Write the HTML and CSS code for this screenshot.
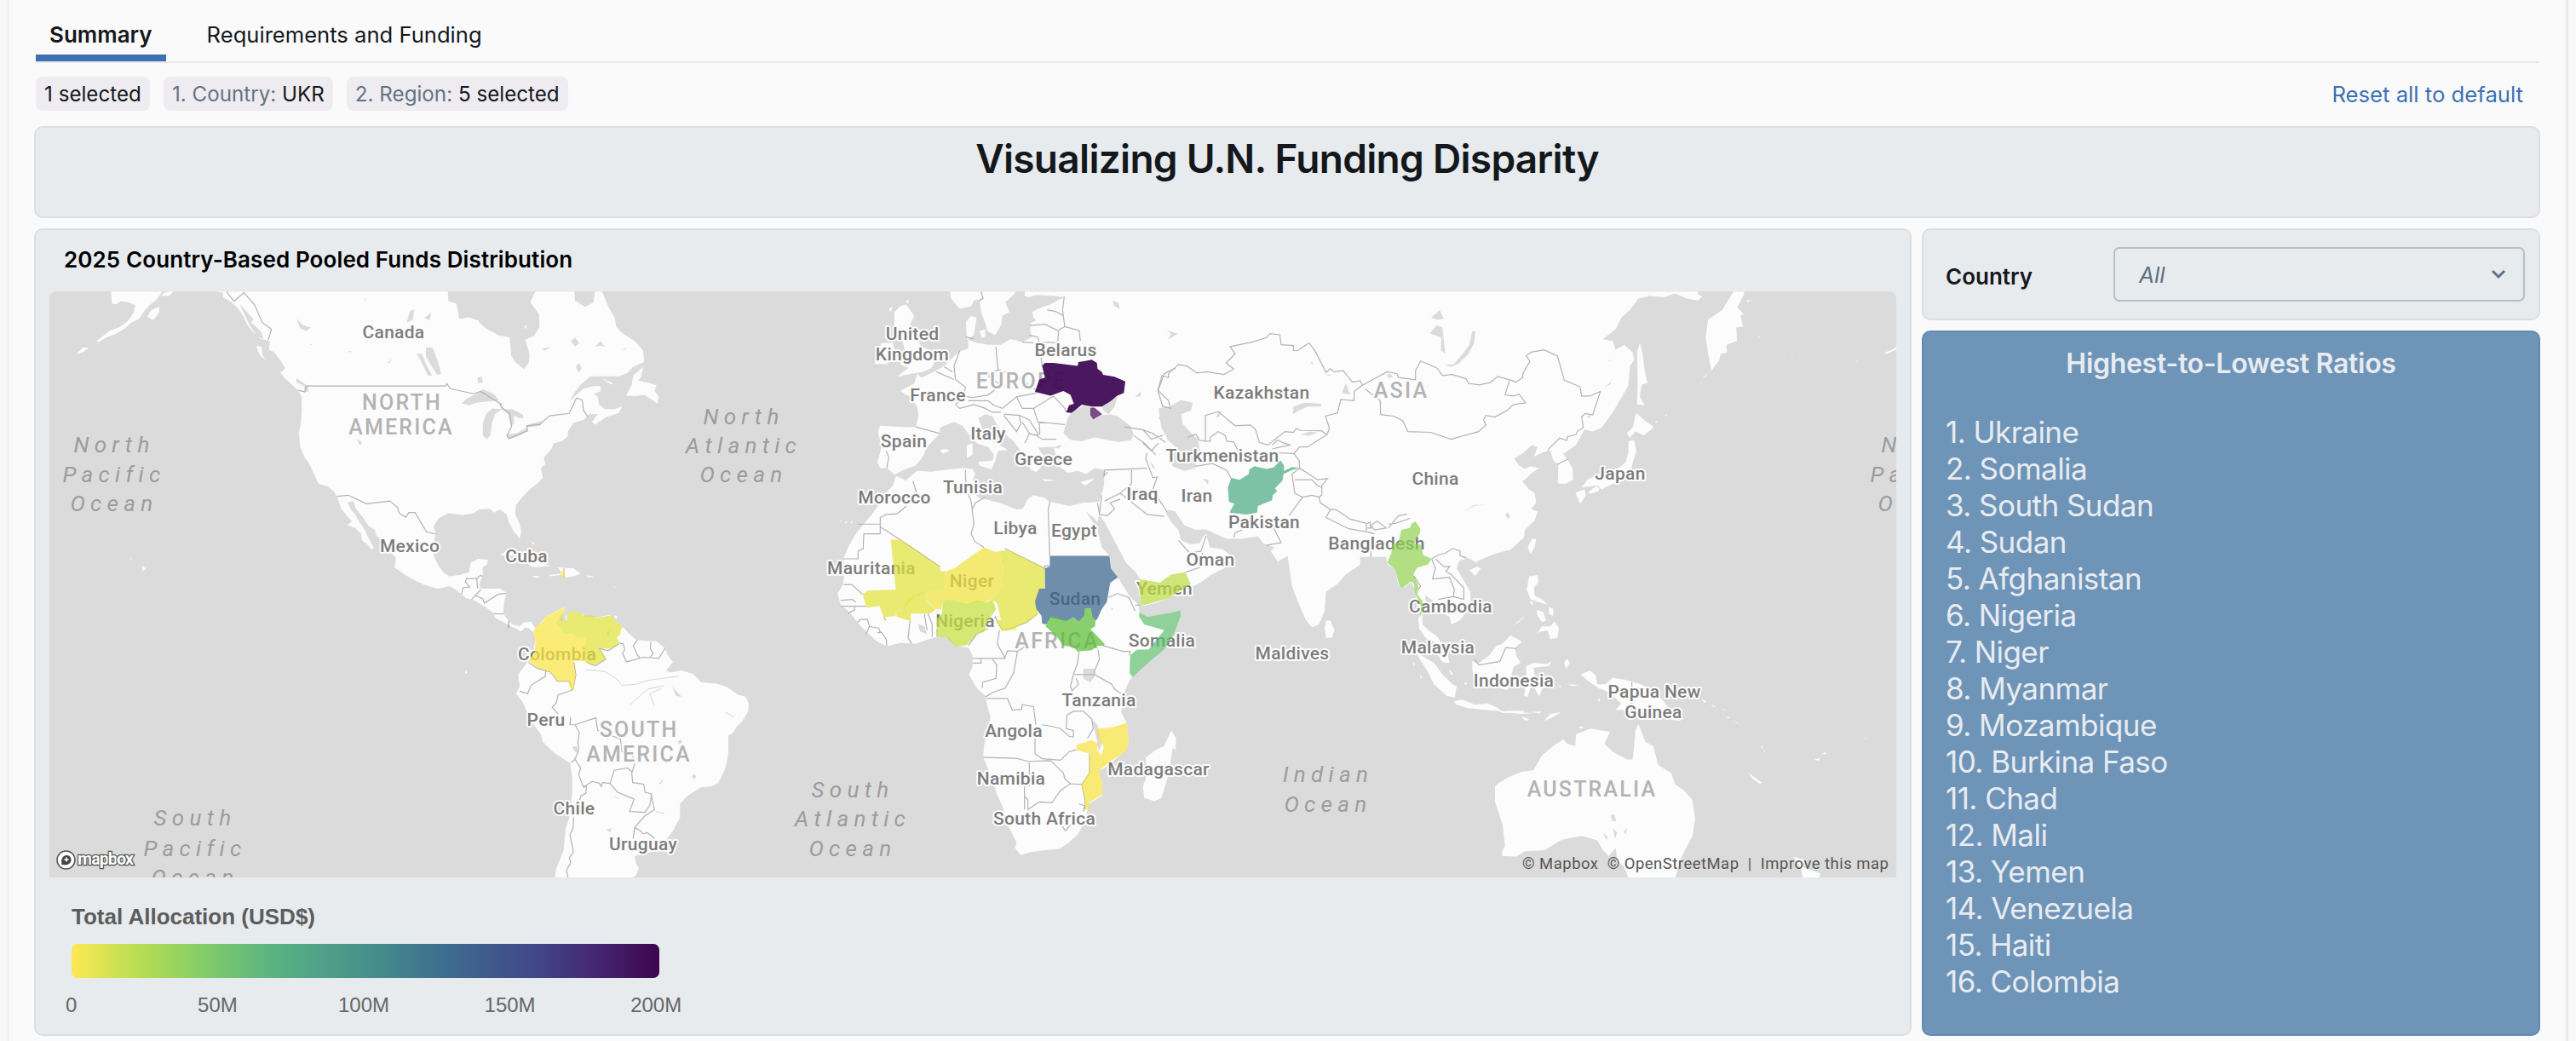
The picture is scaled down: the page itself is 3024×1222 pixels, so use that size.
FILE: index.html
```
<!DOCTYPE html>
<html lang="en">
<head>
  <meta charset="UTF-8">
  <meta name="viewport" content="width=device-width, initial-scale=1.0">
  <title>Visualizing U.N. Funding Disparity</title>
  <link rel="stylesheet" href="styles.css">
</head>
<body>
  <div class="page">
    <nav class="tabs">
      <a class="tab active">Summary</a>
      <a class="tab">Requirements and Funding</a>
    </nav>

    <div class="filters">
      <span class="chip">1 selected</span>
      <span class="chip"><em>1. Country:</em> UKR</span>
      <span class="chip"><em>2. Region:</em> 5 selected</span>
      <a class="reset">Reset all to default</a>
    </div>

    <header class="card banner">
      <h1>Visualizing U.N. Funding Disparity</h1>
    </header>

    <main class="grid">
      <section class="card map-card">
        <h2>2025 Country-Based Pooled Funds Distribution</h2>
        <svg class="map" viewBox="58 342 2168 688">
          <!-- land -->
          <g class="land">
            <g transform="translate(40 330) scale(.357143 .452806)">
              <path d="M253 27L256 58 270 60 285 52 312 56 332 62 328 80 310 102 280 120 250 128 205 155 212 158 240 145 265 138 300 122 318 108 345 98 362 78 380 62 400 50 412 38 420 27ZM418 38L425 31 440 27 458 27 445 38ZM372 92L385 75 412 66 410 82 392 101ZM140 188L160 172 180 172 165 182 145 189Z"/>
              <path d="M598 27L620 30 622 42 650 55 672 72 690 95 700 112 720 132 745 150 775 155 772 178 790 185 812 208 825 225 812 238 822 250 850 270 868 283 880 300 880 340 877 370 870 395 875 430 888 455 905 475 920 500 935 525 965 532 985 545 995 558 1010 590 1030 610 1045 622 1030 632 1055 640 1075 655 1078 672 1095 682 1110 697 1117 692 1108 678 1095 660 1088 645 1070 625 1055 605 1040 590 1030 575 1050 570 1058 590 1080 612 1100 635 1120 645 1125 660 1145 672 1145 700 1175 705 1190 718 1185 742 1220 762 1250 775 1280 787 1330 798 1365 790 1390 802 1405 812 1420 822 1440 825 1462 833 1462 720 1435 730 1430 755 1400 762 1365 765 1345 755 1330 738 1315 715 1310 690 1320 655 1313 635 1330 615 1360 602 1410 606 1445 602 1462 592 1462 103 1430 94 1398 98 1388 58 1362 52 1360 27Z"/>
              <path d="M730 168L748 170 750 190 760 205 740 190ZM808 235L832 236 838 241 815 242ZM355 738L368 745 357 752ZM316 718L320 719 318 722ZM1417 1008L1425 1015 1417 1018Z"/>
            </g>
            <g transform="translate(560 330) scale(.333333 .452806)">
              <path d="M0 102L30 122 75 140 115 146 120 192 135 210 165 228 182 212 185 190 170 152 200 142 220 120 218 85 188 55 205 27 342 27 345 50 380 67 410 55 415 27 440 27 465 70 485 95 490 118 512 135 555 155 585 180 588 210 550 222 530 238 500 247 400 247 365 268 340 292 325 312 372 280 410 272 435 272 436 285 412 292 425 300 430 320 450 332 485 332 510 325 500 342 455 352 415 372 405 365 425 345 395 345 375 360 340 367 320 390 320 402 298 415 270 420 262 435 235 458 240 475 225 485 232 510 215 523 185 540 160 560 137 580 135 605 150 630 156 650 150 667 130 650 112 625 105 605 80 592 60 600 45 590 0 592Z"/>
              <path d="M525 297L545 268 550 245 585 222 578 248 568 258 610 265 632 270 625 285 640 300 635 318 618 308 600 300 590 295 560 298ZM440 252L480 265 470 268ZM165 118L176 114 172 124Z"/>
              <path d="M0 720L38 722 35 735 20 742 20 765 10 780 10 797 80 797 104 808 95 835 92 862 105 875 125 890 150 895 165 885 190 883 205 900 200 912 182 900 170 898 155 908 135 900 118 895 95 885 62 872 60 862 30 845 0 832Z"/>
              <path d="M80 710L110 697 145 700 200 725 258 738 205 742 185 738 180 725 140 712ZM285 742L340 745 365 758 340 765 315 768 290 762 258 765 255 762 300 758ZM194 764L222 765 215 769 200 768ZM388 763L409 765 405 768 388 767ZM190 673L202 680 198 684ZM485 866L494 868 492 875 484 874ZM483 792L489 793 486 796Z"/>
              <path d="M205 900L225 885 245 868 280 855 310 845 308 855 290 875 300 885 315 865 340 855 370 862 380 872 420 872 470 865 485 880 515 897 530 910 560 930 600 933 630 933 660 950 672 970 690 988 665 1010 680 1015 720 1009 760 1018 790 1040 840 1043 880 1052 920 1073 945 1077 957 1095 955 1115 935 1140 915 1155 900 1172 885 1178 885 1225 875 1262 850 1300 825 1310 790 1312 740 1335 715 1355 715 1390 690 1425 670 1445 655 1460 620 1478 555 1490 560 1510 570 1522 560 1540 550 1546 275 1546 278 1525 305 1475 312 1420 325 1390 335 1330 335 1285 328 1250 270 1222 232 1195 225 1175 200 1150 175 1115 160 1090 138 1070 150 1050 145 1020 165 1000 180 985 200 955 205 930 198 910Z"/>
            </g>
            <g transform="translate(960 330) scale(.333333 .452806)">
              <path d="M275 505L310 517 350 492 400 494 460 488 510 485 545 487 555 500 545 515 558 530 545 548 570 562 640 575 700 592 722 590 740 565 760 555 800 562 815 572 850 577 885 583 935 575 990 572 992 604 985 625 970 612 945 598 985 645 1000 690 1028 712 1035 745 1057 768 1075 790 1100 818 1130 840 1133 858 1160 870 1240 860 1277 853 1275 875 1255 915 1220 955 1160 990 1108 1027 1098 1035 1085 1055 1070 1090 1070 1120 1088 1145 1095 1195 1085 1218 1050 1238 1010 1262 988 1270 1002 1300 1000 1335 955 1355 950 1370 940 1400 915 1435 885 1455 850 1472 800 1475 750 1480 715 1488 695 1470 700 1455 680 1425 665 1405 650 1360 630 1330 620 1300 600 1265 583 1235 585 1205 600 1160 608 1130 595 1095 590 1075 560 1055 532 1020 545 1000 545 970 530 950 485 945 465 925 440 920 405 925 345 940 290 938 242 947 210 935 180 915 165 905 140 885 120 865 100 850 80 838 70 810 90 785 95 740 90 720 110 685 130 660 150 640 185 610 200 595 225 570 245 545 265 530Z"/>
              <path d="M465 27L470 45 500 72 540 65 550 50 570 48 575 80 590 110 598 130 625 140 645 115 650 90 675 80 660 55 690 35 697 27Z"/>
              <path d="M730 27L728 38 740 42 770 36 830 38 870 42 850 48 820 60 775 72 755 80 760 95 770 102 750 108 748 130 755 145 720 158 680 150 645 165 600 165 560 160 525 150 522 105 540 90 560 95 555 115 550 140 530 150 530 175 500 182 480 195 445 220 410 235 365 250 350 240 340 265 290 285 325 300 350 325 355 350 345 378 300 378 220 375 212 390 225 430 210 470 220 485 245 485 270 502 300 490 345 478 370 455 385 430 430 395 430 380 480 365 510 375 530 395 560 420 600 430 620 450 615 470 625 465 635 440 670 438 640 425 600 405 580 385 565 355 590 345 615 350 640 385 690 415 715 440 735 465 750 490 770 495 790 478 800 455 780 440 800 430 830 430 838 450 850 480 880 497 915 492 945 500 975 485 1010 490 1008 530 990 575 992 605 1010 625 1050 680 1085 730 1120 755 1138 775 1130 790 1138 838 1150 842 1200 832 1200 27Z"/>
              <path d="M270 80L290 65 310 60 340 90 325 112 345 140 365 170 415 185 415 205 400 225 370 235 330 240 280 248 300 235 320 225 290 215 310 190 300 160 290 130 270 115ZM225 160L265 160 270 190 245 215 200 215 205 195 215 180ZM570 130L590 125 590 145 575 145ZM250 72L262 66 258 80ZM310 52L322 48 318 58Z"/>
              <path d="M525 425L545 420 545 450 525 458ZM535 395L545 398 542 412ZM565 468L625 465 612 488 570 478ZM790 513L840 517 800 519ZM925 522L945 516 975 512 955 524 940 530ZM430 438L450 435 465 440 440 447ZM95 624L103 623 98 629ZM115 626L123 620 120 629ZM78 621L82 620 81 625Z"/>
            </g>
            <g transform="translate(1340 330) scale(.333333 .452806)">
              <path d="M58 27L58 832 95 822 165 795 200 785 245 762 290 745 322 715 285 695 240 690 228 655 215 665 205 680 170 682 140 672 130 645 105 625 85 600 95 593 118 597 150 632 190 645 225 643 260 655 300 668 350 668 410 662 430 680 470 690 455 700 480 727 515 712 522 750 530 790 550 830 580 880 600 898 625 890 645 855 650 805 690 785 720 760 770 735 770 715 808 715 860 715 868 735 895 750 905 790 925 795 950 780 965 800 970 830 985 860 975 875 978 900 1000 925 1030 935 1045 970 1060 988 1085 990 1075 960 1045 925 1030 915 1010 905 990 890 988 850 1000 835 1000 815 1030 830 1050 855 1085 870 1092 890 1120 880 1160 845 1158 805 1130 770 1110 745 1120 725 1150 718 1180 730 1185 725 1240 708 1290 698 1302 696 1302 27Z"/>
              <path d="M955 950L985 970 1030 990 1060 1020 1095 1045 1110 1050 1103 1080 1075 1075 1030 1045 1010 1015 985 985ZM1100 1090L1130 1085 1175 1098 1220 1095 1250 1105 1270 1115 1215 1112 1150 1107 1110 1098ZM1165 985L1185 992 1225 970 1250 945 1270 940 1300 918 1340 935 1315 950 1320 970 1335 990 1310 1000 1300 1030 1290 1060 1260 1055 1220 1050 1190 1050 1165 1010ZM650 880L665 880 680 905 670 925 650 925 645 900ZM1155 750L1180 740 1195 745 1175 764ZM955 988L963 992 960 997ZM980 1020L988 1026 984 1030ZM1080 1005L1098 1018 1092 1022ZM1138 1040L1147 1042 1140 1048ZM1275 1118L1290 1114 1340 1118 1380 1120 1340 1122ZM1335 1130L1365 1138 1350 1138Z"/>
              <path d="M105 1165L122 1185 120 1215 110 1210 95 1280 70 1340 45 1348 10 1340 5 1310 20 1280 15 1235 50 1215 80 1205ZM252 1273L256 1274 254 1277Z"/>
            </g>
            <g transform="translate(1760 330) scale(.333333 .452806)">
              <path d="M38 27L38 698 60 682 87 665 90 645 125 620 135 598 112 590 130 575 125 550 105 540 82 520 110 500 140 485 110 480 90 487 70 478 52 460 85 445 115 425 135 430 122 455 150 445 180 438 190 465 208 475 206 525 235 525 260 515 258 485 240 462 225 448 270 425 300 385 330 390 360 380 400 340 440 290 455 270 460 220 475 205 470 185 440 165 410 178 400 155 365 150 410 125 430 95 460 75 490 45 530 38 580 42 620 32 660 45 700 50 715 40 700 35 700 27Z"/>
              <path d="M825 27L785 75 735 100 727 145 735 185 747 232 775 205 780 188 802 185 800 165 837 155 835 120 858 118 850 90 860 85 838 68 862 35 862 27ZM718 250L735 238 728 248ZM870 50L886 48 875 56ZM910 140L917 145 914 149ZM1355 186L1385 178 1398 170 1398 178 1365 188ZM1255 207L1260 206 1258 209ZM1028 191L1034 191 1032 194ZM708 266L712 264 710 268ZM582 347L593 345 586 349Z"/>
              <path d="M485 185L495 160 505 190 512 230 522 265 502 268 495 300 512 322 485 320 488 270ZM482 342L510 360 545 378 510 400 480 390 460 405 448 395 470 380ZM455 415L475 412 483 440 470 470 465 490 430 520 400 525 360 540 345 530 290 535 310 515 350 500 420 485 445 470 455 445ZM268 548L300 540 305 555 285 578 275 560ZM316 545L340 532 352 537 350 545 318 552ZM548 365L560 361 552 368Z"/>
              <path d="M100 690L115 668 130 668 125 690 110 708ZM105 765L135 762 138 780 122 795 125 815 150 825 170 838 150 835 110 825 97 800ZM132 852L155 858 165 880 150 884 135 868ZM175 845L190 848 190 868 175 862ZM132 915L150 895 180 895 195 882 210 900 205 925 180 928 170 905 140 910ZM48 893L90 868 70 884ZM106 830L118 832 116 842Z"/>
              <path d="M95 1020L95 998 120 990 170 992 185 985 175 998 120 1002 130 1040 155 1050 140 1078 115 1040 100 1078 88 1075ZM228 990L240 978 248 990 235 1005ZM285 1020L320 1010 340 1022 345 1045 375 1045 400 1028 440 1033 500 1045 550 1065 580 1090 600 1110 640 1140 610 1138 560 1120 500 1115 450 1112 410 1112 430 1095 385 1065 350 1055 320 1040ZM240 1045L285 1047 260 1050ZM0 1115L90 1114 80 1120 10 1119ZM110 1117L150 1116 140 1121ZM80 1129L108 1136 95 1139ZM158 1140L180 1122 218 1117 185 1132ZM275 1156L298 1154 290 1160ZM347 1085L355 1080 352 1094ZM712 1082L730 1090 722 1093ZM745 1096L762 1104 755 1104ZM780 1106L800 1114 795 1114ZM798 1130L815 1131 808 1134ZM828 1142L842 1145 836 1146ZM205 1050L220 1049 215 1053Z"/>
              <path d="M-15 1310L0 1300 35 1285 80 1272 120 1268 150 1230 190 1205 225 1188 240 1200 268 1205 270 1175 320 1160 390 1168 370 1200 400 1220 450 1240 470 1240 480 1165 490 1148 515 1195 542 1205 560 1255 605 1275 620 1305 650 1320 680 1345 690 1395 680 1440 650 1480 638 1500 620 1546 455 1546 440 1520 415 1500 410 1470 385 1490 365 1475 345 1450 290 1438 220 1448 160 1475 90 1478 60 1492 10 1490 10 1478 20 1465 12 1410-15 1350Z"/>
              <path d="M1035 1492L1075 1500 1070 1520 1130 1535 1128 1546 1070 1546 1060 1520ZM878 1275L925 1300 918 1303 895 1292ZM1110 1240L1130 1237 1125 1244ZM1132 1226L1152 1220 1150 1226ZM920 1204L930 1208 926 1212ZM930 1216L939 1222 934 1221ZM1287 1184L1293 1184 1291 1187Z"/>
            </g>
          </g>

          <!-- lakes and inland seas -->
          <g class="water">
            <path transform="translate(40 330) scale(.357143 .452806)" d="M1405 317L1425 303 1460 290 1475 280 1510 292 1530 310 1490 312 1450 316 1430 322ZM1505 330L1485 345 1475 370 1475 400 1488 410 1500 400 1505 370 1515 345 1540 332ZM1288 172L1310 172 1330 215 1338 240 1325 243 1300 212 1288 195ZM1258 188L1275 188 1285 210 1308 245 1295 245 1270 205ZM862 98L885 115 910 120 895 130 875 122ZM1225 108L1235 78 1250 73 1245 100ZM1283 95L1305 82 1300 102ZM1162 212L1175 200 1168 213ZM1457 250L1472 248 1475 262 1460 265ZM1060 408L1078 418 1072 427ZM862 252L900 272 903 288 890 285 888 272 862 262ZM675 58L700 80 720 98 715 108 745 130 755 150 735 145 712 118 695 92ZM1030 182L1045 181 1038 185ZM905 162L915 165 910 167ZM1086 46L1090 46 1088 52Z"/>
            <path transform="translate(560 330) scale(.333333 .452806)" d="M75 318L95 332 125 332 160 345 165 355 145 355 130 348 130 370 118 375 110 345 90 335ZM103 398L112 410 145 402 178 390 175 380 140 394ZM175 380L225 374 230 362 180 372ZM330 155L345 147 360 160 345 170ZM415 170L435 155 450 170 430 168ZM230 175L260 170 240 180ZM348 222L360 212 368 225 358 238ZM512 178L532 170 520 178ZM430 300L480 295 482 322 455 328 440 318ZM335 1208L350 1205 357 1222 345 1220ZM688 1052L705 1065 720 1078 700 1075ZM455 1422L473 1417 470 1430ZM302 868L312 872 317 885 305 885ZM455 912L468 905 462 920ZM705 1195L718 1188 722 1195 715 1200ZM756 1285L765 1277 772 1285 765 1292ZM638 1305L655 1292 650 1302Z"/>
            <path transform="translate(960 330) scale(.333333 .452806)" d="M880 355L900 335 940 322 965 330 962 350 970 360 1000 348 1030 345 1055 350 1100 375 1112 395 1105 412 1060 417 1020 412 975 405 930 415 890 412 865 395ZM1000 325L1040 305 1055 300 1045 325 1025 345 1005 335ZM825 432L860 424 850 434ZM775 432L830 430 838 455 800 455ZM1038 50L1058 56 1065 72 1045 65ZM1118 300L1140 285 1135 299ZM935 1005L975 1005 975 1025 960 1040 935 1030ZM352 888L375 895 385 915 360 908ZM965 1135L985 1150 1000 1200 990 1220 980 1180ZM430 150L480 190 440 215ZM1200 330L1240 325 1260 345 1225 400 1210 380ZM1225 595L1260 600 1260 610 1230 605ZM1033 846L1040 848 1036 854Z"/>
            <path transform="translate(1340 330) scale(.333333 .452806)" d="M75 340L110 320 140 308 180 315 175 335 140 345 145 370 170 390 200 410 205 440 190 485 150 492 110 480 100 460 120 430 90 410 80 375 60 355ZM262 355L270 340 283 335 275 350ZM533 345L535 325 575 315 635 318 630 325 585 325 555 335ZM1070 218L1100 215 1130 190 1155 165 1165 130 1176 130 1172 160 1150 190 1115 215 1090 222ZM560 398L595 390 620 393 590 401ZM863 243L878 240 885 248 872 252ZM215 512L235 515 235 527ZM30 465L48 485 38 485ZM88 127L128 137 95 151 105 137ZM1020 95L1050 75 1065 98 1045 100ZM1015 135L1040 115 1060 120 1070 188 1055 180 1055 145ZM705 290L720 265 735 295ZM595 208L605 212 603 218ZM1130 600L1170 580 1210 580 1170 583ZM1285 607L1290 601 1298 608 1290 616ZM650 243L670 242 660 246Z"/>
            <path transform="translate(1760 330) scale(.333333 .452806)" d="M22 605L30 601 38 608 30 616ZM308 350L320 347 318 356ZM392 1385L405 1382 412 1400 398 1400ZM365 1430L382 1440 378 1450ZM400 1418L415 1430 408 1445ZM438 1428L450 1418 446 1434ZM385 207L395 202 390 207ZM370 275L392 262 397 245 392 268Z"/>
          </g>

          <g class="rivers">
            <path transform="translate(560 330) scale(.333333 .452806)" d="M385 1007L450 1012 490 1030 510 1048 560 1045 600 1035 650 1030 710 1024M540 1098L600 1058 660 1048M625 1100L608 1070 650 1055M485 1335L497 1342M875 1118L905 1130M630 1375L660 1380"/>
          </g>

          <!-- country borders -->
          <g class="borders">
            <path transform="translate(40 330) scale(.357143 .452806)" d="M632 27L657 52 690 30 725 62 750 107 780 125 770 152M868 283L890 287 895 272 1352 272 1357 266 1368 279 1445 292 1468 286 1538 320M995 558L1033 555 1092 577 1170 570 1195 587 1200 601 1222 612 1232 600 1252 600 1290 650 1320 656M1405 812L1410 795 1432 793 1418 780 1422 771 1455 771 1467 763 1475 765M1455 771L1458 797M1468 800L1438 825M1450 815L1475 823 1480 835 1525 812 1552 809M1512 862L1543 863M1558 900L1562 880"/>
            <path transform="translate(560 330) scale(.333333 .452806)" d="M80 316L88 328 115 343 122 377 105 400 112 408 178 388 175 375 220 372 255 349 325 343 350 303 370 308 375 335 390 352M180 988L210 1003 242 1010 240 1025 190 1048 178 1070 150 1063M242 1010L258 1013 283 1037 325 1037 335 1060 285 1073 280 1092 265 1105 285 1122M330 1130L327 1150 345 1150 418 1132 425 1165 505 1187 510 1220 545 1222 555 1252 545 1275 548 1300 587 1304 592 1325 615 1330 608 1360 590 1377 537 1375 553 1343 495 1325 468 1302 483 1268 530 1262 545 1272M345 1150L360 1170 355 1195 358 1215 345 1240 330 1248M345 1240L365 1262 358 1280 375 1312 405 1297 432 1302 437 1310 443 1300 468 1302M375 1312L385 1310 383 1328 365 1335 362 1345M340 1390L338 1420 327 1435 340 1480 325 1495 330 1508 315 1527 320 1546M613 1330L625 1370 590 1387 555 1417 550 1445M555 1417L575 1425 585 1433 600 1430 625 1445M500 938L515 940 520 955 512 965 527 987 585 975 640 978 662 952M565 930L550 945 565 970 575 978M612 935L610 952 620 965 610 975M380 985L400 993 418 997 453 980 430 952 462 958 500 940M340 985L348 1020 338 1060M306 745L306 768M111 882L114 898"/>
            <path transform="translate(960 330) scale(.333333 .452806)" d="M220 637L220 613 240 605 280 603 312 583M335 518L348 550M140 630L220 630M220 637L220 655 162 655 160 693 142 700 142 720 90 720M220 637L290 670 430 740M520 490L522 540 540 570 550 630 540 655 553 675 585 690M545 590L555 575 590 560M658 693L800 745 800 738 817 738M817 572L812 590 812 600 817 712M92 787L120 787 158 812M80 828L120 825 135 832M80 843L170 843M105 862L130 852 130 843M140 885L150 877 175 877 182 895 170 915M182 895L215 900 220 910 210 912 225 910 242 930 242 947M232 870L240 880M325 880L318 925 330 940M375 862L385 905M388 862L403 890 403 922M420 858L420 922M530 945L560 915 600 900 625 870 650 905M640 905L632 940 660 978 545 978M545 990L575 990 575 980M615 980L630 995 628 1030 580 1040 580 1055M703 960L690 1015 660 1055 620 1065 590 1078M658 978L668 958 703 960 735 945M595 1082L668 1082 685 1112 718 1110 720 1098 760 1103 768 1150M765 1185L765 1225 790 1238 855 1242 885 1220 910 1215M790 1150L830 1155 855 1160 885 1180 900 1182 900 1165 875 1160 877 1125 900 1115 935 1115 965 1135 970 1160 950 1185M583 1235L700 1237 740 1245 820 1243M728 1370L728 1310M745 1310L745 1248M728 1335L740 1345 740 1370 780 1350 825 1352 855 1320 890 1303 930 1305 957 1275 957 1225M820 1243L865 1275 870 1290 890 1303M855 1405L872 1425 890 1410M930 1305L940 1340 942 1370M920 1355L940 1360 935 1375M1098 970L1100 960 1075 960 1005 945M985 945L992 980 975 1010 975 1020 1035 1045 1045 1058 1070 1070M920 960L915 990 900 1020 890 1050 895 1062 918 1045 910 1030M903 1020L975 1020M1025 820L1055 810 1095 820 1118 855M1118 840L1135 840M775 862L735 885 700 895 650 905"/>
            <path transform="translate(960 330) scale(.333333 .452806)" d="M500 180L480 220 485 255 520 275 515 298 485 320M418 235L480 255M445 222L475 235M345 378L430 395M243 485L250 455 240 440M627 170L635 230 598 245 655 275M635 230L700 245 770 283M515 298L545 302 600 295 640 272M530 310L600 310 620 322 650 330 700 300 770 290M485 320L500 330 550 320 590 330 615 340 645 340M700 300L720 330 760 330 830 298M655 345L710 348 715 370 700 390 655 348M710 348L745 360 775 395M760 330L775 365 870 372M720 365L745 395 770 400 790 410 840 410M730 420L745 395M780 365L782 395 770 400M830 298L870 330 875 340M747 115L800 112 845 128 870 118 862 75 868 40M808 75L835 78 862 88M870 118L920 128 925 155M745 140L775 145 780 158 845 160 848 130M720 158L760 160M790 220L782 170M575 27L582 45 570 50M522 145L550 150M1260 225L1220 240 1198 285 1215 325 1245 330M1080 378L1145 385 1180 395 1225 418M1112 400L1150 420 1190 450M1145 385L1175 410 1215 400M1145 420L1175 440 1200 420M1160 445L1155 460 1180 510 1195 508 1180 540 1205 570 1230 598M1160 485L1010 490 1008 505 1020 495M1105 490L1105 525 1065 550 1010 570M1065 550L1160 605 1200 608 1220 610M990 605L1020 608 1045 590 1030 575 1065 565M985 575L992 603 1000 555"/>
            <path transform="translate(1340 330) scale(.333333 .452806)" d="M100 325L95 310 58 283 72 245 95 250 95 240 130 216 160 220 195 238 230 235 290 242 325 228 298 212 330 188 312 170 388 158 440 147 452 136 487 139 492 165 535 167 535 180 550 180 590 160 612 182 650 237 665 227 678 235 710 232 743 262 770 258 778 270 750 285 748 310 702 307 690 342 648 350 662 382 653 398 633 388 560 387 545 382 535 392 505 390 445 425 415 418 402 385 383 373 330 375 270 338 225 348 225 415 205 413 192 397 162 405M225 415L242 415 242 405 270 390 295 400 300 415 325 417 340 440M653 398L610 418 585 430 557 430 537 447 555 465 557 485 600 505 620 515 655 512 635 530 635 555 625 560 630 575 665 592M460 425L480 412 500 420 525 425 490 430 460 435M480 445L537 447M778 270L865 235 900 240 905 250 965 256 965 232 983 207 1040 225 1060 245 1095 242 1143 253 1152 265 1190 269 1228 263 1255 247 1297 256 1280 295 1310 298 1330 293 1353 316 1310 320 1288 335 1245 352 1212 348 1205 360 1213 373 1187 390 1090 410 1018 392 938 390 920 362 888 350 842 346 841 310 788 280M665 592L685 592 735 617 792 628 792 650 730 642 650 613 665 592M795 628L805 625 808 640 795 640M808 633L830 622 862 640 820 645 808 633M870 640L905 608 935 605M870 630L895 628 945 615M795 650L820 655M808 715L808 690M325 665L330 652 355 645M520 608L567 560 600 555 628 560M440 685L492 678 465 640M190 480L250 473 300 490 318 515M557 485L530 500 540 550 567 560M540 515L600 515 620 530 635 535M130 672L170 705 210 700 228 660M155 755L205 742 215 705M1022 720L1045 710 1070 705 1097 693 1122 700 1122 712 1145 718M1022 720L1035 745 1025 772 1055 770 1085 768 1102 800 1098 818 1045 825M1035 720L1065 740 1085 740 1072 752 1090 760 1135 795 1135 825 1098 818M960 765L983 790 975 800M1173 980L1188 995 1262 986 1283 950 1320 953"/>
            <path transform="translate(1760 330) scale(.333333 .452806)" d="M40 256L58 262 83 250 83 240 108 208 95 194 112 184 158 178 205 194 229 257 285 274 290 298 318 298 356 286 329 347 303 343 290 351 296 380 275 390 270 398 240 403 238 413 213 407 170 438M205 475L243 461M467 1040L467 1112"/>
          </g>

          <!-- labels -->
          <g class="oceans">
            <text x="134" y="531">North</text><text x="134" y="566">Pacific</text><text x="134" y="600">Ocean</text>
            <text x="2256" y="531">North</text><text x="2256" y="566">Pacific</text><text x="2256" y="600">Ocean</text>
            <text x="873" y="498">North</text><text x="873" y="532">Atlantic</text><text x="873" y="566">Ocean</text>
            <text x="229" y="969">South</text><text x="229" y="1005">Pacific</text><text x="229" y="1039">Ocean</text>
            <text x="1001" y="936">South</text><text x="1001" y="970">Atlantic</text><text x="1001" y="1005">Ocean</text>
            <text x="1559" y="918">Indian</text><text x="1559" y="953">Ocean</text>
          </g>
          <g class="continents">
            <text x="472" y="481">NORTH</text><text x="471" y="510">AMERICA</text>
            <text x="750" y="865">SOUTH</text><text x="750" y="894">AMERICA</text>
            <text x="1199" y="456">EUROPE</text>
            <text x="1241" y="761">AFRICA</text>
            <text x="1645" y="467">ASIA</text>
            <text x="1869" y="935">AUSTRALIA</text>
          </g>
          <g class="countries">
            <text x="462" y="397">Canada</text>
            <text x="481" y="648">Mexico</text>
            <text x="618" y="660">Cuba</text>
            <text x="654" y="775">Colombia</text>
            <text x="641" y="852">Peru</text>
            <text x="674" y="956">Chile</text>
            <text x="755" y="998">Uruguay</text>
            <text x="1071" y="399">United</text>
            <text x="1071" y="423">Kingdom</text>
            <text x="1251" y="418">Belarus</text>
            <text x="1101" y="471">France</text>
            <text x="1061" y="525">Spain</text>
            <text x="1160" y="516">Italy</text>
            <text x="1225" y="546">Greece</text>
            <text x="1142" y="579">Tunisia</text>
            <text x="1050" y="591">Morocco</text>
            <text x="1192" y="627">Libya</text>
            <text x="1261" y="630">Egypt</text>
            <text x="1341" y="587">Iraq</text>
            <text x="1023" y="674">Mauritania</text>
            <text x="1141" y="689">Niger</text>
            <text x="1133" y="736">Nigeria</text>
            <text x="1262" y="710">Sudan</text>
            <text x="1367" y="698">Yemen</text>
            <text x="1364" y="759">Somalia</text>
            <text x="1290" y="829">Tanzania</text>
            <text x="1190" y="865">Angola</text>
            <text x="1187" y="921">Namibia</text>
            <text x="1226" y="968">South Africa</text>
            <text x="1360" y="910">Madagascar</text>
            <text x="1481" y="468">Kazakhstan</text>
            <text x="1435" y="542">Turkmenistan</text>
            <text x="1405" y="589">Iran</text>
            <text x="1484" y="620">Pakistan</text>
            <text x="1421" y="664">Oman</text>
            <text x="1616" y="645">Bangladesh</text>
            <text x="1685" y="569">China</text>
            <text x="1517" y="774">Maldives</text>
            <text x="1703" y="719">Cambodia</text>
            <text x="1688" y="767">Malaysia</text>
            <text x="1777" y="806">Indonesia</text>
            <text x="1902" y="563">Japan</text>
            <text x="1942" y="819">Papua New</text>
            <text x="1941" y="843">Guinea</text>
          </g>

          <!-- funded countries -->
          <g class="funded">
            <g transform="translate(560 330) scale(.333333 .452806)">
              <path fill="#fbe640" d="M313 845L305 858 290 870 278 888 290 895 298 914 340 915 352 925 382 925 385 960 383 985 340 985 342 1000 347 1020 340 1060 335 1060 322 1045 325 1037 285 1037 258 1013 215 1003 180 985 205 960 205 930 198 910 208 895 228 885 245 868 275 858Z"/>
              <path fill="#dfe236" d="M305 858L300 872 305 885 318 880 315 865 340 855 365 860 375 868 405 866 420 873 475 866 485 880 515 897 505 905 505 915 492 925 502 938 470 953 430 952 455 978 418 995 390 992 383 985 382 925 352 925 340 915 298 914 290 895 278 888 290 870Z"/>
              <path fill="#fbe640" d="M303 745L306 745 306 768 288 764 300 757Z"/>
            </g>
            <g transform="translate(960 330) scale(.333333 .452806)">
              <path fill="#dfe236" d="M257 670L290 670 430 740 433 752 448 753 445 798 380 808 340 818 300 850 275 855 275 868 232 872 218 842 172 847 158 812 175 802 275 800Z"/>
              <path fill="#e3e237" d="M275 855L300 850 320 825 355 810 378 808 385 830 415 852 395 862 328 862 327 882 278 870Z"/>
              <path fill="#f1e339" d="M448 753L480 745 585 690 625 702 640 700 645 730 655 735 650 792 612 825 600 830 560 832 530 837 460 825 440 828 435 852 415 850 385 828 378 808 445 798Z"/>
              <path fill="#dfe236" d="M640 700L670 697 800 745 798 797 780 797 765 830 770 845 778 862 735 885 700 895 697 903 650 907 625 880 645 878 632 835 612 825 650 792 655 735 645 730Z"/>
              <path fill="#c4df3b" d="M440 828L460 825 530 837 560 828 600 832 615 825 628 850 600 880 585 910 560 915 525 943 487 948 450 922 420 922 420 875 438 860Z"/>
              <path fill="#326089" d="M817 712L1027 712 1033 745 1057 768 1030 782 1018 832 1000 850 985 875 978 880 965 868 962 848 940 848 940 866 920 883 900 872 875 882 820 872 805 890 790 888 788 868 770 850 765 830 780 797 800 797 800 745 817 740Z"/>
              <path fill="#59bd31" d="M820 870L845 872 875 882 900 872 920 883 940 865 938 848 962 847 965 868 978 875 977 895 960 902 990 925 1010 940 1008 945 985 945 965 957 915 960 900 948 865 945 840 920 802 895Z"/>
              <path fill="#f7e33b" d="M985 1160L1035 1157 1088 1145 1095 1195 1085 1220 1030 1245 990 1270 1002 1300 1000 1332 955 1352 957 1368 942 1370 940 1335 928 1308 957 1270 957 1225 910 1215 912 1202 965 1190 988 1200 983 1215 998 1230 1008 1208 985 1180Z"/>
              <path fill="#61bf6d" d="M1132 858L1160 870 1240 860 1277 853 1277 870 1255 915 1220 955 1170 985 1108 1027 1098 1015 1100 970 1125 955 1165 955 1220 905 1150 890 1132 870Z"/>
              <path fill="#bddb3f" d="M1130 785L1138 773 1205 782 1245 760 1295 755 1313 785 1235 822 1150 840 1138 838Z"/>
              <path fill="#400c55" class="top" d="M790 220L800 212 830 212 915 220 918 210 965 204 983 212 985 227 1000 235 1005 243 1045 248 1083 260 1078 290 1055 297 1030 312 1000 325 965 325 930 320 905 335 893 342 875 340 885 322 902 318 890 295 865 285 820 297 765 287 780 255 800 250Z"/>
              <path fill="#440154" d="M960 328L975 328 1002 345 985 352 970 359 960 348Z"/>
            </g>
            <g transform="translate(1340 330) scale(.333333 .452806)">
              <path fill="#49a982" d="M304 535L317 510 345 515 378 500 380 488 398 480 440 487 465 483 490 465 502 478 502 492 530 482 557 485 530 490 500 500 497 517 470 537 478 545 462 555 460 568 410 583 407 600 370 605 310 600 327 577 308 572Z"/>
              <path fill="#93d251" d="M950 630L965 623 982 642 980 655 965 670 962 682 985 683 992 710 1022 720 1008 735 970 743 958 760 975 790 972 812 990 830 990 855 980 873 985 845 962 805 960 785 950 778 920 795 908 790 895 750 866 730 880 705 885 680 905 678 915 645 945 640Z"/>
            </g>
          </g>

          <!-- mapbox logo and attribution -->
          <g class="logo">
            <circle cx="77.500" cy="1009.500" r="10.500"/>
            <path class="drop" d="M72.500 1015c-1-5 0-11 6-11a5 5 0 0 1 5 5c0 6-6 7-11 6z"/>
            <path class="star" d="M78 1005.500l1 2.500 2.500 1-2.500 1-1 2.500-1-2.500-2.500-1 2.500-1z"/>
            <text x="91" y="1015" textLength="66">mapbox</text>
          </g>
          <text class="credit" x="1787" y="1020" textLength="430">© Mapbox&nbsp; © OpenStreetMap &nbsp;| &nbsp;Improve this map</text>
        </svg>

        <div class="legend">
          <h3>Total Allocation (USD$)</h3>
          <div class="ramp"></div>
          <div class="ticks">
            <span>0</span>
            <span>50M</span>
            <span>100M</span>
            <span>150M</span>
            <span>200M</span>
          </div>
        </div>
      </section>

      <aside class="side">
        <div class="card country">
          <label>Country</label>
          <div class="select">
            <span>All</span>
            <svg width="18" height="12" viewBox="0 0 18 12"><path d="M2 2l7 7 7-7"/></svg>
          </div>
        </div>

        <div class="card ratios">
          <h2>Highest-to-Lowest Ratios</h2>
          <div class="ranking">
            <div>1. Ukraine</div>
            <div>2. Somalia</div>
            <div>3. South Sudan</div>
            <div>4. Sudan</div>
            <div>5. Afghanistan</div>
            <div>6. Nigeria</div>
            <div>7. Niger</div>
            <div>8. Myanmar</div>
            <div>9. Mozambique</div>
            <div>10. Burkina Faso</div>
            <div>11. Chad</div>
            <div>12. Mali</div>
            <div>13. Yemen</div>
            <div>14. Venezuela</div>
            <div>15. Haiti</div>
            <div>16. Colombia</div>
          </div>
        </div>
      </aside>
    </main>
  </div>
</body>
</html>
```
FILE: styles.css
```
* {
  box-sizing: border-box;
}
body {
  margin: 0;
  padding: 0 9px;
  height: 1222px;
  overflow: hidden;
  background: #f8f8f8;
  font-family: Inter, "Liberation Sans", sans-serif;
  color: #14181c;
}
h1, h2, h3 {
  margin: 0;
}
.page {
  height: 1222px;
  padding: 0 30px 6px 30px;
  background: #fafafa;
  border-left: 1px solid #e6e6e8;
  border-right: 3px solid #e8ebee;
}
.tabs {
  display: flex;
  height: 74px;
  gap: 32px;
  margin: 0 1px 0 2px;
  border-bottom: 2px solid #e8e8e8;
}
.tab {
  height: 72px;
  padding: 25px 16px 0;
  font-size: 25.6px;
  line-height: 32px;
}
.tab.active {
  font-size: 26px;
  font-weight: 600;
  border-bottom: 8px solid #3c71b3;
}
.filters {
  display: flex;
  gap: 16px;
  height: 74px;
  padding: 16px 20px 18px 2px;
}
.chip {
  padding: 0 10px;
  border-radius: 8px;
  background: #eeecf0;
  font-size: 24.2px;
  line-height: 41px;
  white-space: nowrap;
}
.chip em {
  font-style: normal;
  color: #647382;
}
.reset {
  margin-left: auto;
  font-size: 25.7px;
  line-height: 42px;
  color: #3c71b3;
}
.card {
  border: 2px solid #dcdfe2;
  border-radius: 10px;
  background: #e7ebee;
}
.banner {
  height: 108px;
  margin-bottom: 12px;
}
.banner h1 {
  padding-top: 6px;
  text-align: center;
  font-size: 46px;
  font-weight: 600;
  line-height: 60px;
  letter-spacing: -0.7px;
}
.grid {
  display: grid;
  grid-template-columns: 2204px 1fr;
  gap: 12px;
  height: 948px;
}

/* map */
.map-card h2 {
  height: 72px;
  padding: 19px 33px 0;
  font-size: 26px;
  font-weight: 600;
  line-height: 32px;
  letter-spacing: 0.1px;
  color: #000;
}
.map {
  display: block;
  width: 2168px;
  height: 688px;
  margin-left: 16px;
  border-radius: 8px 8px 0 0;
  background: #dbdbdb;
}
.land {
  fill: #fcfcfc;
}
.water {
  fill: #dbdbdb;
}
.borders path, .rivers path {
  fill: none;
  stroke: #b3b3b3;
  stroke-width: 1.2;
  vector-effect: non-scaling-stroke;
}
.rivers path {
  stroke: #d6d6d6;
  stroke-width: 1;
}
.map text {
  font-family: Roboto, "Liberation Sans", sans-serif;
}
.countries text, .continents text {
  text-anchor: middle;
  paint-order: stroke;
  stroke: #fcfcfc;
  stroke-width: 4px;
  stroke-linejoin: round;
}
.countries text {
  font-size: 21px;
  font-weight: 500;
  letter-spacing: 0.3px;
  fill: #7c7c7c;
}
.continents text {
  font-size: 25px;
  font-weight: 500;
  letter-spacing: 2.2px;
  fill: #b3b3b3;
}
.oceans text {
  text-anchor: middle;
  font-size: 26px;
  font-style: italic;
  letter-spacing: 6.3px;
  fill: #9c9c9c;
}
.funded path {
  opacity: 0.7;
}
.funded .top {
  opacity: 0.95;
}
.logo circle {
  fill: #fff;
  stroke: #555;
  stroke-width: 1.5;
}
.logo .drop {
  fill: #444;
}
.logo .star {
  fill: #fff;
}
.logo text {
  font-size: 20px;
  font-weight: 700;
  fill: #fff;
  stroke: #555;
  stroke-width: 2.5px;
  paint-order: stroke;
}
.map .credit {
  font-size: 18.5px;
  fill: #555;
}

/* legend */
.legend {
  padding: 30px 42px 0;
  font-family: "Liberation Sans", sans-serif;
}
.legend h3 {
  font-size: 26px;
  line-height: 32px;
  color: #5c5c5c;
}
.ramp {
  width: 690px;
  height: 40px;
  margin-top: 16px;
  border-radius: 7px;
  background: linear-gradient(90deg, #fde854, #b5dd52 12%, #7cca6c 24%, #58b183 35%, #46918b 50%, #3d6c8e 64%, #41478a 79%, #45246f 90%, #3d064e);
}
.ticks {
  display: flex;
  width: 858px;
  margin: 18px 0 0 -86px;
}
.ticks span {
  width: 171.6px;
  text-align: center;
  font-size: 24px;
  line-height: 28px;
  color: #666;
}

/* right column */
.side {
  display: flex;
  flex-direction: column;
  gap: 12px;
}
.country {
  display: flex;
  justify-content: space-between;
  height: 108px;
  padding: 20px 16px 0 26px;
}
.country label {
  padding-top: 19px;
  font-size: 26px;
  font-weight: 600;
  line-height: 32px;
}
.select {
  display: flex;
  align-items: center;
  justify-content: space-between;
  width: 483px;
  height: 64px;
  padding: 0 20px 0 28px;
  border: 2px solid #b9bec2;
  border-radius: 7px;
  font-size: 26px;
  font-style: italic;
  color: #5f7182;
}
.select path {
  fill: none;
  stroke: #5f7182;
  stroke-width: 3;
}
.ratios {
  flex: 1;
  padding: 16px 26px;
  border-color: #648bb0;
  background: #6e95b8;
  color: #e8ebf0;
}
.ratios h2 {
  text-align: center;
  font-size: 32px;
  font-weight: 600;
  line-height: 42px;
  letter-spacing: -0.3px;
}
.ranking {
  margin-top: 38px;
  font-size: 35px;
  line-height: 43px;
  letter-spacing: -0.55px;
}
```
